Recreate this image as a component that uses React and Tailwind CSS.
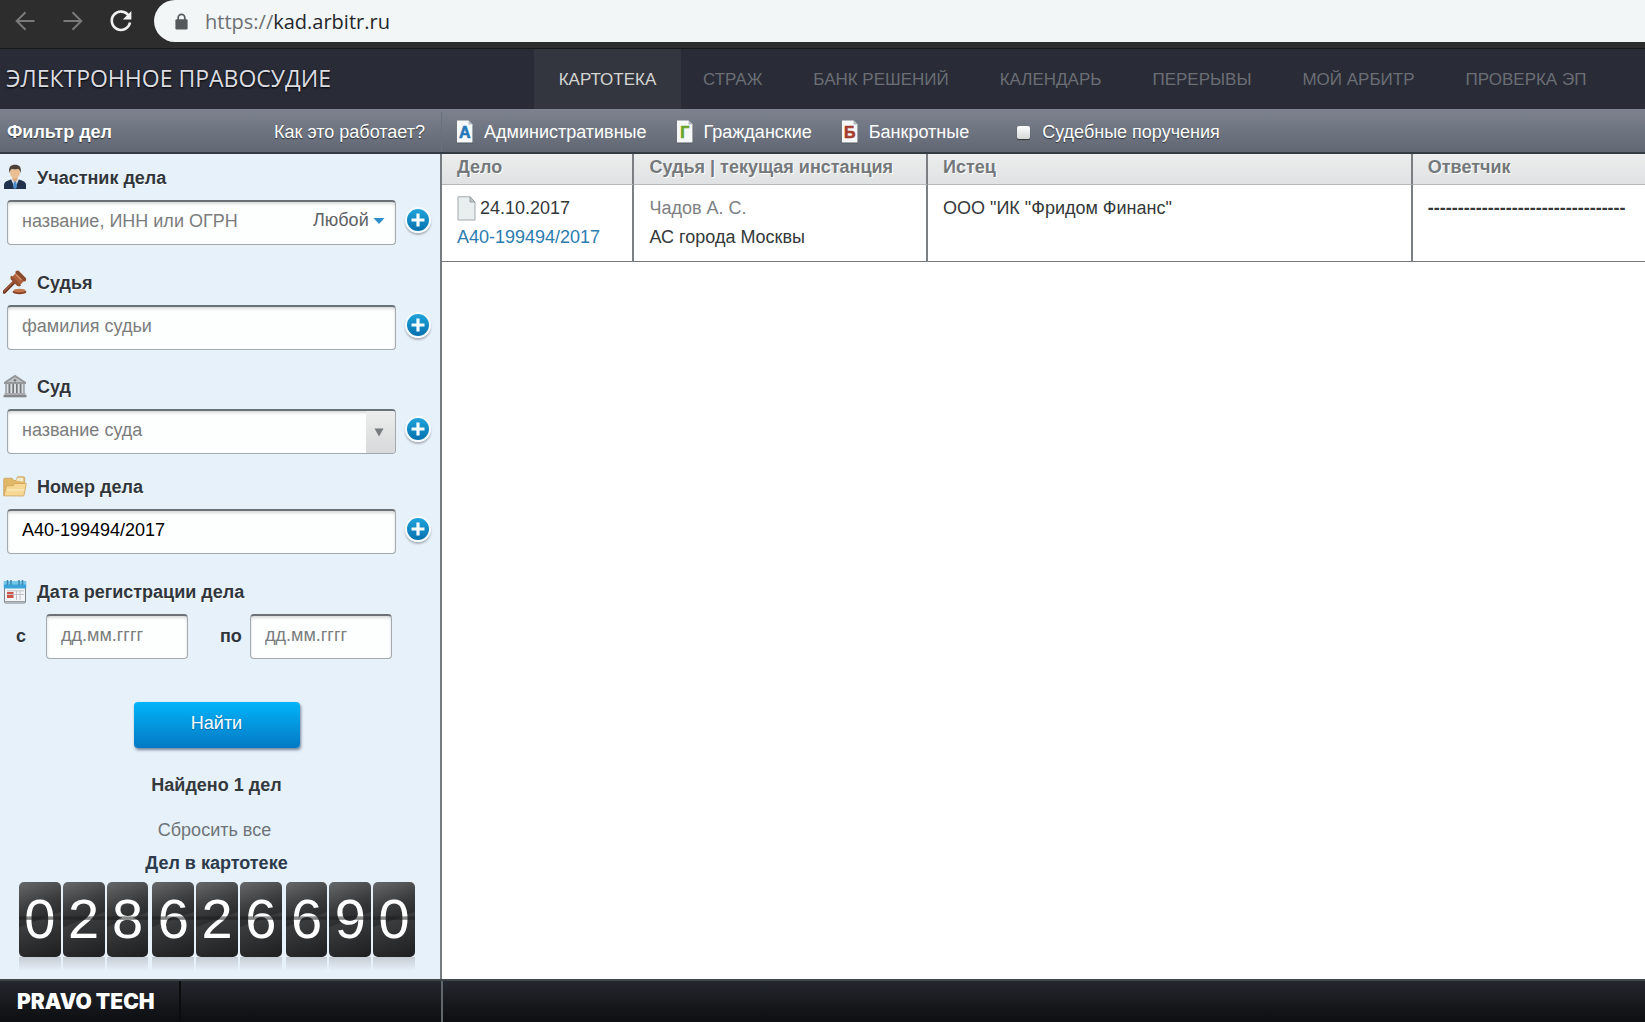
import React from "react";

const NAV = ["СТРАЖ", "БАНК РЕШЕНИЙ", "КАЛЕНДАРЬ", "ПЕРЕРЫВЫ", "МОЙ АРБИТР", "ПРОВЕРКА ЭП"];
const COUNTER = ["028", "626", "690"];

const FIELD =
  "flex h-[45px] items-center overflow-hidden rounded-[4px] border border-[#a3a9ad] border-t-2 border-t-[#6b7176] bg-[#fdfefe] shadow-[inset_0_2px_3px_rgba(0,0,0,0.14)]";
const INPUT =
  "h-full min-w-0 flex-1 bg-transparent pb-[3px] pl-[14px] text-[18px] text-black outline-none placeholder:text-[#7b7d7d] placeholder:opacity-100";

function BackIcon({ flip }) {
  return (
    <svg width="22" height="22" viewBox="0 0 22 22" className={flip ? "rotate-180" : ""} fill="none" stroke="#7a7a7a" strokeWidth="2">
      <path d="M20.5 11H3M11.5 2.2 2.7 11l8.8 8.8" />
    </svg>
  );
}

function ReloadIcon() {
  return (
    <svg width="24" height="24" viewBox="0 0 24 24" fill="none">
      <path d="M19.6 6.6A9.2 9.2 0 1 0 21 13.6" stroke="#f1f1f1" strokeWidth="2.6" />
      <path d="M22.4 2v8.6h-8.6z" fill="#f1f1f1" />
    </svg>
  );
}

function LockIcon() {
  return (
    <svg width="13" height="17" viewBox="0 0 13 17">
      <path d="M3.2 7V4.6a3.3 3.3 0 0 1 6.6 0V7" fill="none" stroke="#56595b" strokeWidth="1.7" />
      <rect x="0.4" y="6.2" width="12.2" height="10.4" rx="1.4" fill="#56595b" />
    </svg>
  );
}

function PersonIcon() {
  return (
    <svg width="24" height="26" viewBox="0 0 24 26">
      <path d="M1 25v-4c0-3 3-4.600 7-5.600h8c4 1 7 2.600 7 5.600v4z" fill="#22324d" />
      <path d="m8 15 4 9.500 4-9.500z" fill="#dce9f5" />
      <path d="m11 16.500-1 6.500 2 2.500 2-2.500-1-6.500z" fill="#4f8fd0" />
      <path d="M9.500 12h5v4L12 18l-2.500-2z" fill="#d9a777" />
      <ellipse cx="12" cy="8.500" rx="5" ry="6" fill="#e9bf93" />
      <path d="M6.500 9C5 3 8 .8 12 .8S19 3 17.500 9c-.6-3-1.500-4-2.500-4.300-2 .7-4.500.7-6 0C8 5.400 7 6.500 6.500 9" fill="#4c4038" />
    </svg>
  );
}

function GavelIcon() {
  return (
    <svg width="24" height="25" viewBox="0 0 24 25">
      <ellipse cx="16.500" cy="22" rx="7" ry="2.200" fill="#8b4326" />
      <ellipse cx="16.500" cy="20.500" rx="6" ry="1.700" fill="#c1764d" />
      <path d="m1.200 22 11.500-11.500" stroke="#70341e" strokeWidth="3.400" strokeLinecap="round" />
      <path d="M1.200 21.300 12.500 10" stroke="#a9613f" strokeWidth="1.200" strokeLinecap="round" />
      <path d="m13.500 2.500 8 8-4.500 4.500-8-8z" fill="#b0603c" />
      <path d="m12.800 1 2.600-.600 7.900 8-.600 2.800-1.600.3-8.700-8.700z" fill="#8a4a2e" />
      <path d="m8.500 5.600 9.600 9.600-1.400 1.200-2.400-.300-6.500-6.600-.400-2.500z" fill="#95502f" />
      <path d="m13 4.500 5.500 5.500" stroke="#d18f69" strokeWidth="1.600" />
    </svg>
  );
}

function CourtIcon() {
  return (
    <svg width="24" height="24" viewBox="0 0 24 24">
      <path d="M12 .8 23 8v2H1V8z" fill="#96999c" />
      <path d="M12 3.300 19.500 8h-15z" fill="#c3c6c8" />
      <circle cx="12" cy="6.300" r="1.400" fill="#7b7e80" />
      <rect x="2.500" y="10" width="19" height="9.500" fill="#74777a" />
      <path d="M4.500 10v9.500M8.300 10v9.500M12 10v9.500M15.700 10v9.500M19.500 10v9.500" stroke="#dcdfe1" strokeWidth="2" />
      <path d="M1.500 19h21v2h-21z" fill="#a9acae" />
      <path d="M.500 21h23v2.300H.500z" fill="#85888a" />
    </svg>
  );
}

function FolderIcon() {
  return (
    <svg width="24" height="21" viewBox="0 0 24 21">
      <path d="M.7 19.500V3.500c0-.8.5-1.300 1.300-1.300h7l2 2.300h2L14.500.8h6.200c.7 0 1 .5 1 1.200v9z" fill="#e3b768" stroke="#c79c55" strokeWidth=".7" />
      <path d="M13 4.500 14.500 1.700h5.800v4z" fill="#f3ead2" />
      <path d="M.8 19.800 3.700 9.700h6.500l1.800-2.200h11.300l-2.100 11.300c-.2.900-.6 1.200-1.300 1.200z" fill="#f6d794" stroke="#cda35a" strokeWidth=".8" />
      <path d="M4 14h17" stroke="#fbe6b4" strokeWidth="1.600" />
    </svg>
  );
}

function CalendarIcon() {
  return (
    <svg width="24" height="25" viewBox="0 0 24 25">
      <rect x="1.500" y="5" width="21" height="19" rx="1" fill="#f3f5f6" stroke="#7c8489" />
      <path d="M.8 2h22.400v7.500H.8z" fill="#3ba3d9" />
      <path d="M1 2h22v3.500H1z" fill="#74c6ec" />
      <path d="M4.500 1v5M8 1v5M16 1v5M19.500 1v5" stroke="#3f86ae" strokeWidth="1.500" />
      <rect x="4" y="13" width="6.500" height="6" fill="#cf5347" />
      <path d="M13.500 12v9M17 12v9M4 15.500h17M4 11.800h17" stroke="#bec4c8" strokeWidth="1" />
      <path d="M1.500 22.600h21" stroke="#9aa1a6" strokeWidth="1.200" />
    </svg>
  );
}

function PlusButton({ label }) {
  return (
    <button type="button" aria-label={label} className="mb-[5px] flex size-[26px] shrink-0 items-center justify-center rounded-full border-2 border-[#f6fafc] bg-linear-to-b from-[#1fa4dc] to-[#0671ad] shadow-[0_2px_2px_rgba(0,0,0,0.25)]">
      <svg width="14" height="14" viewBox="0 0 14 14">
        <path d="M7 .5v13M.5 7h13" stroke="#f4fbff" strokeWidth="3.200" />
      </svg>
    </button>
  );
}

function FieldTitle({ icon, htmlFor, children }) {
  return (
    <label htmlFor={htmlFor} className="flex h-[30px] items-center gap-[10px] pl-[3px] text-[18px] leading-[22px] font-bold text-[#30363c] [text-shadow:0_1px_0_#fff]">
      <span className="w-[24px] shrink-0">{icon}</span>
      <span className="pt-[2px]">{children}</span>
    </label>
  );
}

function FieldRow({ label, children }) {
  return (
    <div className="mt-[8px] flex items-center gap-[9px] pr-[9px] pl-[7px]">
      <div className={FIELD + " min-w-0 flex-1"}>{children}</div>
      <PlusButton label={label} />
    </div>
  );
}

function DocLetter({ letter, color }) {
  return (
    <svg width="18" height="24" viewBox="0 0 18 24">
      <path d="M1 1h11.500L17 5.500V23.500H1z" fill="#414953" opacity=".6" />
      <path d="M1 .5h11.500L16.500 4.500V22.500H1z" fill="#f6f8f8" />
      <path d="M12.500.5v4h4z" fill="#b3bbc0" />
      <text x="8.700" y="18" textAnchor="middle" fontSize="16" fontWeight="700" fontFamily="Liberation Sans" stroke={color} strokeWidth=".6" fill={color}>
        {letter}
      </text>
    </svg>
  );
}

function TypeButton({ letter, color, children }) {
  return (
    <button type="button" className="flex items-center gap-[10px]">
      <DocLetter letter={letter} color={color} />
      {children}
    </button>
  );
}

function Digit({ value }) {
  return (
    <div className="min-w-0 flex-1">
      <div className="relative flex h-[75px] items-center justify-center rounded-[5px] bg-linear-[160deg,#66696b_0%,#3b3c3d_32%,#2c2d2e_49%,#3b3c3d_51%,#1d1e1f_100%] pb-[2px] text-[56px] leading-[64px] text-white">
        {value}
        <span className="absolute inset-x-0 top-[34px] h-[4px] bg-linear-to-b from-[#1b1c1d]/25 via-[#1b1c1d]/60 to-[#1b1c1d]/40" />
      </div>
      <div className="h-[14px] bg-linear-to-b from-[#c6ccd4] to-[#e7f1fa]" />
    </div>
  );
}

function BrowserBar() {
  return (
    <div className="flex h-[49px] items-start border-b border-[#16181c] bg-[#2d2d2d]">
      <div className="flex h-[42px] w-[154px] shrink-0 items-center pl-[14px]">
        <button type="button" aria-label="Назад"><BackIcon /></button>
        <button type="button" aria-label="Вперёд" className="ml-[26px]"><BackIcon flip /></button>
        <button type="button" aria-label="Обновить" className="ml-[25px]"><ReloadIcon /></button>
      </div>
      <div className="flex h-[42px] flex-1 items-center gap-[17px] rounded-l-full bg-[#f2f6f7] pl-[21px] font-['Open_Sans','Noto_Sans',sans-serif] text-[20px] text-[#24272a]">
        <LockIcon />
        <div className="pt-[2px]">
          <span className="text-[#6d7072]">https://</span>kad.arbitr.ru
        </div>
      </div>
    </div>
  );
}

function SiteHeader() {
  return (
    <header className="flex h-[60px] items-stretch bg-[#292b36]">
      <h1 className="flex w-[534px] shrink-0 items-center pb-[2px] pl-[6px] font-['Open_Sans','Noto_Sans',sans-serif] text-[23px] text-[#dcdde2] [text-shadow:0_1px_2px_#000]">
        ЭЛЕКТРОННОЕ ПРАВОСУДИЕ
      </h1>
      <nav className="flex items-stretch text-[17px] whitespace-nowrap text-[#6b6e75]">
        <a href="#cards" className="flex w-[147px] items-center justify-center bg-[#34363f] pt-[2px] text-[#d5d5d2]">КАРТОТЕКА</a>
        <div className="flex items-center gap-[51px] pt-[2px] pl-[22px]">
          {NAV.map((t) => (
            <a key={t} href="#section">{t}</a>
          ))}
        </div>
      </nav>
    </header>
  );
}

function Toolbar() {
  return (
    <div className="flex h-[45px] items-stretch border-b-2 border-[#353b43] bg-linear-to-b from-[#7d828e] to-[#616873] pt-[3px] text-[18px] whitespace-nowrap text-white [text-shadow:0_1px_1px_#2d333b]">
      <div className="flex w-[442px] shrink-0 items-center justify-between border-r border-[#6a707a] pr-[16px] pl-[7px]">
        <h2 className="font-bold">Фильтр дел</h2>
        <a href="#help">Как это работает?</a>
      </div>
      <div className="flex items-center pl-[14px]">
        <div className="flex items-center gap-[29px]">
          <TypeButton letter="А" color="#2478b8">Административные</TypeButton>
          <TypeButton letter="Г" color="#6aa32a">Гражданские</TypeButton>
          <TypeButton letter="Б" color="#a63a2c">Банкротные</TypeButton>
        </div>
        <label className="ml-[48px] flex items-center gap-[12px]">
          <input type="checkbox" className="size-[13px] appearance-none rounded-[2px] bg-linear-to-b from-white to-[#d5d8d6] shadow-[0_1px_1px_#333]" />
          Судебные поручения
        </label>
      </div>
    </div>
  );
}

function Sidebar() {
  return (
    <aside className="w-[442px] shrink-0 border-r-2 border-[#767b80] bg-[#e7f1fa] pt-[8px]">
      <form onSubmit={(e) => e.preventDefault()}>
        <FieldTitle htmlFor="party" icon={<PersonIcon />}>Участник дела</FieldTitle>
        <FieldRow label="Добавить участника">
          <input id="party" placeholder="название, ИНН или ОГРН" className={INPUT} />
          <div className="flex items-center pr-[10px] pb-[5px]">
            <select aria-label="Роль участника" className="appearance-none bg-transparent text-[18px] text-[#5d6264] outline-none">
              <option>Любой</option>
            </select>
            <svg width="12" height="8" viewBox="0 0 12 8" className="ml-[4px]">
              <path d="M.5 1h11L6 7z" fill="#2d8fca" />
            </svg>
          </div>
        </FieldRow>

        <div className="mt-[22px]">
          <FieldTitle htmlFor="judge" icon={<GavelIcon />}>Судья</FieldTitle>
          <FieldRow label="Добавить судью">
            <input id="judge" placeholder="фамилия судьи" className={INPUT} />
          </FieldRow>
        </div>

        <div className="mt-[21px]">
          <FieldTitle htmlFor="court" icon={<CourtIcon />}>Суд</FieldTitle>
          <FieldRow label="Добавить суд">
            <input id="court" placeholder="название суда" className={INPUT} />
            <button type="button" aria-label="Выбрать суд" className="flex h-full w-[29px] items-center justify-center bg-linear-to-b from-[#eceeee] to-[#d7dada] pr-[4px]">
              <svg width="10" height="9" viewBox="0 0 10 9">
                <path d="M.5.5h9L5 8.500z" fill="#777b7d" />
              </svg>
            </button>
          </FieldRow>
        </div>

        <div className="mt-[17px]">
          <FieldTitle htmlFor="number" icon={<FolderIcon />}>Номер дела</FieldTitle>
          <FieldRow label="Добавить номер дела">
            <input id="number" defaultValue="А40-199494/2017" className={INPUT} />
          </FieldRow>
        </div>

        <div className="mt-[22px]">
          <FieldTitle htmlFor="from" icon={<CalendarIcon />}>Дата регистрации дела</FieldTitle>
          <div className="mt-[8px] flex items-center pl-[16px] text-[18px] font-bold text-[#30363c]">
            <label htmlFor="from" className="w-[30px]">с</label>
            <div className={FIELD + " w-[142px] font-normal"}>
              <input id="from" placeholder="дд.мм.гггг" className={INPUT} />
            </div>
            <label htmlFor="to" className="ml-[32px] w-[30px]">по</label>
            <div className={FIELD + " w-[142px] font-normal"}>
              <input id="to" placeholder="дд.мм.гггг" className={INPUT} />
            </div>
          </div>
        </div>

        <div className="flex flex-col items-center pr-[7px] text-[18px] leading-[22px]">
          <button type="submit" className="mt-[43px] h-[46px] w-[166px] rounded-[4px] bg-linear-to-b from-[#03b4f9] to-[#0579c4] pb-[4px] text-white shadow-[1px_2px_3px_rgba(40,60,90,0.6)] [text-shadow:0_1px_1px_#0568a5]">
            Найти
          </button>
          <p className="mt-[26px] font-bold text-[#34393c]">Найдено 1 дел</p>
          <button type="reset" className="mt-[23px] pr-[4px] text-[#6e7478]">Сбросить все</button>
          <p className="mt-[11px] font-bold text-[#2c3a4c]">Дел в картотеке</p>
        </div>
      </form>
      <div className="mt-[8px] flex gap-[4px] pr-[25px] pb-[8px] pl-[19px]">
        {COUNTER.map((group, i) => (
          <div key={i} className="flex flex-1 gap-[2px]">
            {group.split("").map((d, j) => (
              <Digit key={j} value={d} />
            ))}
          </div>
        ))}
      </div>
    </aside>
  );
}

function Cases() {
  const th = "border-b border-[#b4b8ba] px-[15px] pb-[4px] font-bold border-r-2 border-r-[#7b7f82] last:border-r-0";
  const td = "border-r-2 border-b border-r-[#7b7f82] border-b-[#74787a] px-[15px] pt-[9px] align-top last:border-r-0";
  return (
    <main className="min-w-0 flex-1 bg-white">
      <table className="w-full table-fixed border-separate border-spacing-0 text-left text-[18px] text-[#34383a]">
        <colgroup>
          <col className="w-[16%]" />
          <col className="w-[24.400%]" />
          <col className="w-[40.300%]" />
          <col />
        </colgroup>
        <thead>
          <tr className="h-[31px] bg-linear-to-b from-[#eceeee] to-[#dfe1e2] leading-[26px] text-[#74787b] [text-shadow:1px_1px_0_#fff]">
            <th className={th}>Дело</th>
            <th className={th}>Судья | текущая инстанция</th>
            <th className={th}>Истец</th>
            <th className={th}>Ответчик</th>
          </tr>
        </thead>
        <tbody>
          <tr className="h-[77px] leading-[29px]">
            <td className={td}>
              <div className="flex items-center gap-[4px]">
                <svg width="19" height="25" viewBox="0 0 19 25">
                  <path d="M1 .8h12L18 6v18H1z" fill="#e9eeef" stroke="#a3aaad" />
                  <path d="M13 .8V6h5z" fill="#bcc6ca" stroke="#8c9598" strokeWidth=".8" />
                </svg>
                24.10.2017
              </div>
              <a href="#case" className="text-[#2b7cb0]">А40-199494/2017</a>
            </td>
            <td className={td}>
              <div className="text-[#7d8183]">Чадов А. С.</div>
              <div>АС города Москвы</div>
            </td>
            <td className={td}>ООО "ИК "Фридом Финанс"</td>
            <td className={td + " font-bold"}>---------------------------------</td>
          </tr>
        </tbody>
      </table>
    </main>
  );
}

function Footer() {
  return (
    <footer className="flex h-[43px] items-stretch border-t-2 border-[#41464a] bg-linear-to-b from-[#24272e] to-[#0c0e10]">
      <div className="flex w-[443px] shrink-0 border-r-2 border-[#62676b]">
        <div className="flex w-[181px] items-center border-r-2 border-[#0b0c0e] pl-[17px] font-['Inter',sans-serif] text-[21px] font-black whitespace-nowrap text-white">
          PRAVO TECH
        </div>
      </div>
    </footer>
  );
}

export default function App() {
  return (
    <div className="flex min-h-screen flex-col bg-white font-['Liberation_Sans',Arial,sans-serif]">
      <BrowserBar />
      <SiteHeader />
      <Toolbar />
      <div className="flex flex-1 items-stretch">
        <Sidebar />
        <Cases />
      </div>
      <Footer />
    </div>
  );
}
